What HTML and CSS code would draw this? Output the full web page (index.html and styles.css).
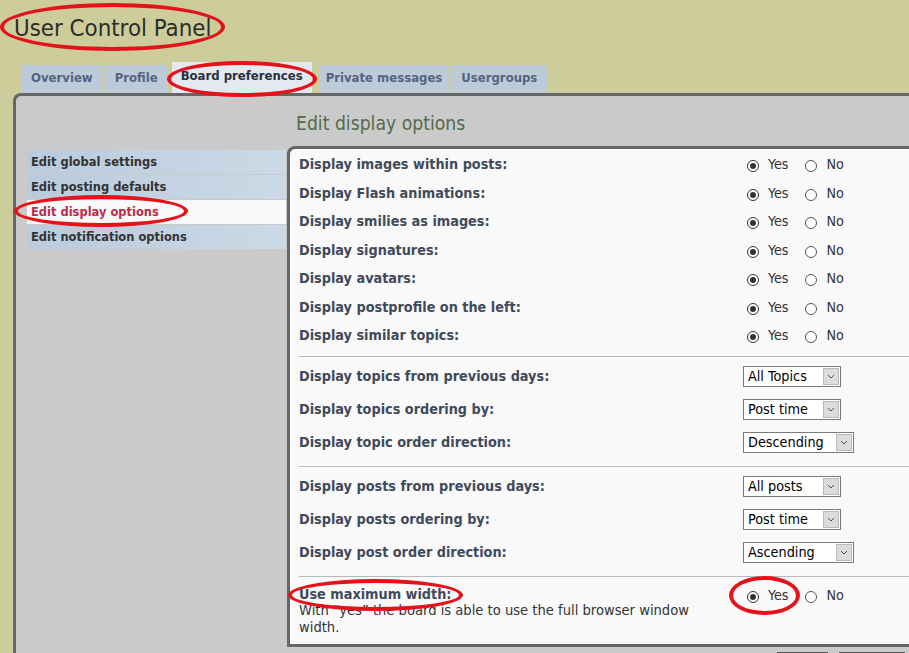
FILE: index.html
```html
<!DOCTYPE html>
<html lang="en">
<head>
<meta charset="utf-8">
<title>User Control Panel</title>
<link rel="stylesheet" href="styles.css">
</head>
<body>
<h1 class="title">User Control Panel</h1>
<div class="tabs">
  <span class="tab">Overview</span>
  <span class="tab">Profile</span>
  <span class="tab active">Board preferences</span>
  <span class="tab narrow">Private messages</span>
  <span class="tab">Usergroups</span>
</div>
<div class="panel">
  <h2 class="panel-title">Edit display options</h2>
  <div class="panel-body">
    <ul class="menu">
      <li class="menu-item">Edit global settings</li>
      <li class="menu-item">Edit posting defaults</li>
      <li class="menu-item active">Edit display options</li>
      <li class="menu-item">Edit notification options</li>
    </ul>
    <div class="box">
      <div class="section first">
        <div class="row"><span class="label">Display images within posts:</span><span class="radios"><span class="opt"><i class="radio on"></i>Yes</span><span class="opt"><i class="radio"></i>No</span></span></div>
        <div class="row"><span class="label">Display Flash animations:</span><span class="radios"><span class="opt"><i class="radio on"></i>Yes</span><span class="opt"><i class="radio"></i>No</span></span></div>
        <div class="row"><span class="label">Display smilies as images:</span><span class="radios"><span class="opt"><i class="radio on"></i>Yes</span><span class="opt"><i class="radio"></i>No</span></span></div>
        <div class="row"><span class="label">Display signatures:</span><span class="radios"><span class="opt"><i class="radio on"></i>Yes</span><span class="opt"><i class="radio"></i>No</span></span></div>
        <div class="row"><span class="label">Display avatars:</span><span class="radios"><span class="opt"><i class="radio on"></i>Yes</span><span class="opt"><i class="radio"></i>No</span></span></div>
        <div class="row"><span class="label">Display postprofile on the left:</span><span class="radios"><span class="opt"><i class="radio on"></i>Yes</span><span class="opt"><i class="radio"></i>No</span></span></div>
        <div class="row"><span class="label">Display similar topics:</span><span class="radios"><span class="opt"><i class="radio on"></i>Yes</span><span class="opt"><i class="radio"></i>No</span></span></div>
      </div>
      <div class="section">
        <div class="row tall"><span class="label">Display topics from previous days:</span><span class="select w98"><span class="sel-val">All Topics</span><span class="sel-arrow"><svg width="8" height="5" viewBox="0 0 8 5"><path d="M1 1 L4 4 L7 1" fill="none" stroke="#555" stroke-width="1"/></svg></span></span></div>
        <div class="row tall"><span class="label">Display topics ordering by:</span><span class="select w98"><span class="sel-val">Post time</span><span class="sel-arrow"><svg width="8" height="5" viewBox="0 0 8 5"><path d="M1 1 L4 4 L7 1" fill="none" stroke="#555" stroke-width="1"/></svg></span></span></div>
        <div class="row tall"><span class="label">Display topic order direction:</span><span class="select w111"><span class="sel-val">Descending</span><span class="sel-arrow"><svg width="8" height="5" viewBox="0 0 8 5"><path d="M1 1 L4 4 L7 1" fill="none" stroke="#555" stroke-width="1"/></svg></span></span></div>
      </div>
      <div class="section">
        <div class="row tall"><span class="label">Display posts from previous days:</span><span class="select w98"><span class="sel-val">All posts</span><span class="sel-arrow"><svg width="8" height="5" viewBox="0 0 8 5"><path d="M1 1 L4 4 L7 1" fill="none" stroke="#555" stroke-width="1"/></svg></span></span></div>
        <div class="row tall"><span class="label">Display posts ordering by:</span><span class="select w98"><span class="sel-val">Post time</span><span class="sel-arrow"><svg width="8" height="5" viewBox="0 0 8 5"><path d="M1 1 L4 4 L7 1" fill="none" stroke="#555" stroke-width="1"/></svg></span></span></div>
        <div class="row tall"><span class="label">Display post order direction:</span><span class="select w111"><span class="sel-val">Ascending</span><span class="sel-arrow"><svg width="8" height="5" viewBox="0 0 8 5"><path d="M1 1 L4 4 L7 1" fill="none" stroke="#555" stroke-width="1"/></svg></span></span></div>
      </div>
      <div class="section last">
        <div class="row top">
          <div class="label-block">
            <span class="label">Use maximum width:</span>
            <span class="desc">With “yes” the board is able to use the full browser window width.</span>
          </div>
          <span class="radios"><span class="opt"><i class="radio on"></i>Yes</span><span class="opt"><i class="radio"></i>No</span></span>
        </div>
      </div>
    </div>
  </div>
  <div class="buttons"><span class="btn b1"></span><span class="btn b2"></span></div>
</div>

<span class="mark m-title"></span>
<span class="mark m-tab"></span>
<span class="mark m-menu"></span>
<span class="mark m-label"></span>
<span class="mark m-yes"></span>
</body>
</html>
```

FILE: styles.css
```css
html, body {
  margin: 0;
  padding: 0;
  overflow: hidden;
  height: 653px;
}
body {
  background: #cdcc9b;
  font-family: "DejaVu Sans Condensed", "DejaVu Sans", sans-serif;
  color: #333;
  position: relative;
}
.title {
  margin: 0;
  padding: 14px 0 0 14px;
  font-size: 23.8px;
  line-height: 28px;
  font-weight: normal;
  color: #2a2d28;
}
.tabs {
  display: flex;
  align-items: flex-end;
  gap: 2px;
  margin: 20px 0 0 21px;
  height: 31px;
}
.tab {
  display: block;
  height: 28px;
  line-height: 26px;
  padding: 0 10px;
  background: #bdcbd9;
  color: #536482;
  font-weight: bold;
  font-size: 13px;
}
.tab.active {
  height: 31px;
  line-height: 28px;
  background: #e3e9ef;
  color: #28313f;
  margin: 0 5px 0 2px;
  padding: 0 9px;
}
.tab.narrow {
  padding: 0 7px;
}
.panel {
  margin-left: 13px;
  border: 3px solid #666;
  border-right: none;
  border-bottom: none;
  border-radius: 8px 0 0 0;
  background: #cacaca;
  height: 558px;
  overflow: hidden;
  padding-left: 11px;
}
.panel-title {
  margin: 0;
  padding: 17px 0 0 269px;
  font-size: 19.2px;
  line-height: 22px;
  font-weight: normal;
  color: #546b4b;
}
.panel-body {
  display: flex;
  margin-top: 11px;
  gap: 1px;
}
.menu {
  list-style: none;
  margin: 4px 0 0 0;
  padding: 0;
  width: 259px;
  display: flex;
  flex-direction: column;
  gap: 1px;
}
.menu-item {
  height: 24px;
  line-height: 24px;
  padding-left: 4px;
  font-size: 12.75px;
  font-weight: bold;
  color: #333;
  background: linear-gradient(to right, #b9cbdc, #ccd9e6);
}
.menu-item.active {
  background: #f9f9f9;
  color: #bc2a4d;
}
.box {
  flex: 1;
  height: 495px;
  border: 3px solid #666;
  border-right: none;
  border-radius: 8px 0 0 0;
  background: #f9f9f9;
  padding-left: 9px;
}
.section {
  border-top: 1px solid #b4bac0;
  padding: 3px 0 7px 0;
}
.section.first {
  border-top: none;
  padding: 1px 0 6px 0;
}
.section.last {
  padding: 9px 0 0 0;
}
.row {
  display: grid;
  grid-template-columns: 444px 1fr;
  align-items: center;
  height: 28.5px;
}
.row.tall {
  height: 33px;
}
.row.top {
  height: auto;
  align-items: start;
}
.label {
  font-size: 14.3px;
  font-weight: bold;
  color: #3f4a5a;
}
.label-block {
  display: flex;
  flex-direction: column;
  line-height: 16.5px;
}
.desc {
  font-size: 14.6px;
  color: #333;
  max-width: 420px;
}
.radios {
  display: flex;
  align-items: center;
  padding-left: 4px;
  font-size: 14.2px;
  color: #333;
}
.row.top .radios {
  padding-top: 1px;
}
.opt {
  display: flex;
  align-items: center;
  margin-right: 17px;
}
.radio {
  display: inline-block;
  box-sizing: border-box;
  width: 12px;
  height: 12px;
  border-radius: 50%;
  border: 1px solid #555;
  background: #fff;
  margin-right: 9px;
  position: relative;
  top: 2px;
}
.radio.on {
  border-color: #333;
}
.radio.on::after {
  content: "";
  position: absolute;
  left: 2px;
  top: 2px;
  width: 6px;
  height: 6px;
  border-radius: 50%;
  background: #333;
}
.select {
  display: flex;
  box-sizing: border-box;
  height: 21px;
  border: 1px solid #7a7a7a;
  background: #fff;
  font-size: 14.3px;
  color: #000;
  align-items: stretch;
}
.select.w98 { width: 98px; }
.select.w111 { width: 111px; }
.sel-val {
  flex: 1;
  padding-left: 4px;
  line-height: 19px;
  white-space: nowrap;
  overflow: hidden;
}
.sel-arrow {
  width: 16px;
  margin: 1px;
  background: #dcdcdc;
  border: 1px solid #b9b9b9;
  box-sizing: border-box;
  display: flex;
  align-items: center;
  justify-content: center;
}
.buttons {
  display: flex;
  gap: 11px;
  padding-left: 750px;
  margin-top: 5px;
}
.btn {
  display: block;
  flex: none;
  height: 20px;
  border: 1px solid #555;
  background: #efefef;
  box-sizing: border-box;
}
.btn.b1 { width: 51px; }
.btn.b2 { width: 66px; }
.mark {
  position: absolute;
  box-sizing: border-box;
  border: 4px solid #e3121b;
  border-radius: 50%;
}
.m-title { left: 0; top: 3px; width: 225px; height: 48px; }
.m-tab { left: 167px; top: 61px; width: 150px; height: 36px; }
.m-menu { left: 14px; top: 195px; width: 174px; height: 32px; }
.m-label { left: 288px; top: 579px; width: 175px; height: 32px; }
.m-yes { left: 729px; top: 576px; width: 71px; height: 39px; }
```
